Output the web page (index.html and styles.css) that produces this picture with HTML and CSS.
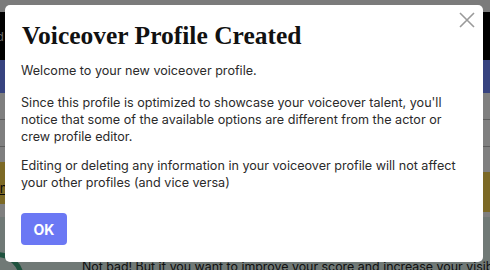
FILE: index.html
```html
<!DOCTYPE html>
<html>
<head>
<meta charset="utf-8">
<link rel="stylesheet" href="styles.css">
</head>
<body>
<div class="page">
  <div class="topstrip"></div>
  <div class="header"><span class="hdr-text">Dashboard</span></div>
  <div class="nav"></div>
  <div class="content">
    <div class="row row-a"></div>
    <div class="row row-b"><span class="row-text">Credits</span></div>
    <div class="banners">
      <div class="banner banner-left"><span class="banner-link">Then</span></div>
      <div class="banner banner-right"></div>
    </div>
    <div class="lower">
      <div class="score">
        <div class="ring"></div>
        <p class="score-text">Not bad! But if you want to improve your score and increase your visibility</p>
      </div>
    </div>
  </div>
</div>
<div class="backdrop"></div>
<div class="modal">
  <button class="close" aria-label="Close">
    <svg width="16" height="16" viewBox="0 0 16 16"><path d="M1 1 L15 15 M15 1 L1 15" stroke="#9a9a9a" stroke-width="1.6" fill="none"/></svg>
  </button>
  <h1 class="title">Voiceover Profile Created</h1>
  <p class="para first">Welcome to your new voiceover profile.</p>
  <p class="para">Since this profile is optimized to showcase your voiceover talent, you'll notice that some of the available options are different from the actor or crew profile editor.</p>
  <p class="para">Editing or deleting any information in your voiceover profile will not affect your other profiles (and vice versa)</p>
  <button class="ok">OK</button>
</div>
</body>
</html>
```

FILE: styles.css
```css
html, body {
  margin: 0;
  padding: 0;
  width: 490px;
  height: 270px;
  overflow: hidden;
  font-family: Inter, "Noto Sans", sans-serif;
}
.page {
  display: flex;
  flex-direction: column;
  width: 490px;
  height: 270px;
  background: #ffffff;
}
.topstrip {
  height: 12px;
  background: #f6f6f6;
}
.header {
  height: 48px;
  background: #000000;
  display: flex;
  align-items: center;
  overflow: hidden;
}
.hdr-text {
  color: #cfcfcf;
  font-size: 12px;
  margin-left: -58px;
}
.nav {
  height: 33px;
  background: #6f86ff;
}
.content {
  flex: 1;
  display: flex;
  flex-direction: column;
  background: #ffffff;
}
.row {
  border-bottom: 1px solid #b8b8b8;
}
.row-a {
  height: 26px;
}
.row-b {
  height: 26px;
  display: flex;
  align-items: center;
  overflow: hidden;
}
.row-text {
  font-size: 14px;
  color: #1c2a55;
  margin-left: -48px;
}
.banners {
  display: flex;
  margin-top: 15px;
}
.banner {
  background: #f9d24a;
}
.banner-left {
  width: 245px;
  height: 42px;
  display: flex;
  align-items: flex-end;
  overflow: hidden;
}
.banner-link {
  font-size: 13px;
  color: #111;
  text-decoration: underline;
  margin-left: -24px;
  margin-bottom: 8px;
}
.banner-right {
  flex: 1;
  height: 40px;
  margin-top: 10px;
}
.lower {
  flex: 1;
  display: flex;
  flex-direction: column;
  background: #ffffff;
}
.score {
  flex: 1;
  display: flex;
  align-items: flex-end;
  background: #e0f2ec;
  margin-top: 5px;
  overflow: hidden;
}
.ring {
  width: 44px;
  height: 44px;
  border: 5px solid #3fa57c;
  border-radius: 50%;
  margin-left: -30px;
  margin-bottom: -36px;
  flex: none;
}
.score-text {
  margin: 0 0 -4px 58px;
  font-size: 12.4px;
  white-space: nowrap;
  color: #222;
  line-height: 14px;
}
.backdrop {
  position: fixed;
  inset: 0;
  background: rgba(0, 0, 0, 0.5);
}
.modal {
  position: fixed;
  left: 5px;
  top: 5px;
  width: 478px;
  height: 257px;
  box-sizing: border-box;
  background: #ffffff;
  border-radius: 5px;
  padding: 16px;
  display: flex;
  flex-direction: column;
  align-items: flex-start;
}
.close {
  position: absolute;
  top: 7px;
  right: 8px;
  width: 16px;
  height: 16px;
  padding: 0;
  border: none;
  background: none;
  display: flex;
}
.title {
  margin: 0 0 11px 1px;
  font-family: "Liberation Serif", "DejaVu Serif", serif;
  font-weight: bold;
  font-size: 25.5px;
  line-height: 30px;
  color: #111111;
}
.para {
  margin: 0 0 12px 0;
  font-size: 12.6px;
  line-height: 17px;
  color: #2b2b2b;
}
.para.first {
  margin-bottom: 15px;
}
.ok {
  margin-top: 10px;
  width: 46px;
  height: 32px;
  border: none;
  border-radius: 4px;
  background: #6b78f4;
  color: #ffffff;
  font-family: Inter, "Noto Sans", sans-serif;
  font-weight: bold;
  font-size: 14px;
  padding: 0;
}
```
